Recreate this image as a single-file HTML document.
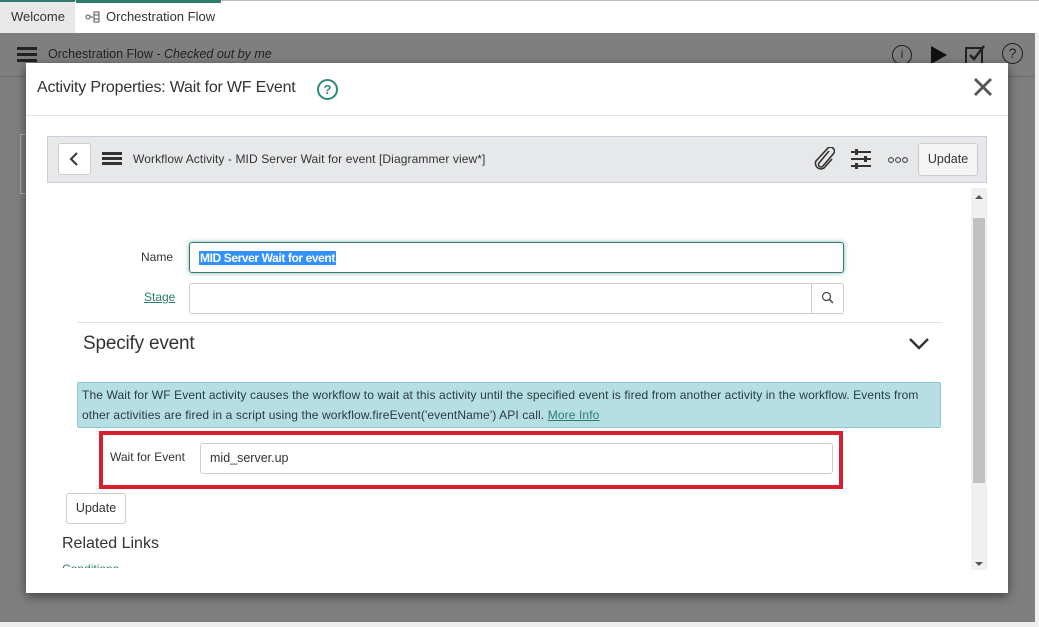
<!DOCTYPE html>
<html><head><meta charset="utf-8"><style>
*{box-sizing:border-box;margin:0;padding:0}
body{width:1039px;height:627px;overflow:hidden;position:relative;font-family:"Liberation Sans",sans-serif;color:#333;background:#fff}
.abs{position:absolute}
.nw{white-space:nowrap}
</style></head><body>
<!-- tab bar -->
<div class="abs" style="left:0;top:0;width:1039px;height:33px;background:#fff;border-top:1px solid #bbb"></div>
<div class="abs" style="left:0;top:0;width:75px;height:33px;background:#e8e8e8;border-top:2px solid #2e7d6f"></div>
<div class="abs nw" style="left:11px;top:9px;font-size:13px;color:#333">Welcome</div>
<div class="abs" style="left:76px;top:0;width:145px;height:3px;background:#2e7d6f"></div>
<svg class="abs" style="left:85px;top:11px" width="16" height="12" viewBox="0 0 16 12"><circle cx="3" cy="6" r="2" fill="none" stroke="#555"/><path d="M5 6h3M9 1h5v10H9zM9 4h5M9 8h5" fill="none" stroke="#555"/></svg>
<div class="abs nw" style="left:106px;top:9px;font-size:13px;color:#333">Orchestration Flow</div>
<!-- gray overlay -->
<div class="abs" style="left:0;top:33px;width:1035px;height:589px;background:#7f7f7f"></div>
<div class="abs" style="left:1035px;top:33px;width:4px;height:594px;background:#f0f0f0"></div>
<div class="abs" style="left:0;top:622px;width:1035px;height:5px;background:#eee"></div>
<div class="abs" style="left:0;top:76px;width:1035px;height:1px;background:#6a6a6a"></div>
<div class="abs" style="left:17px;top:47px;width:20px;height:3px;background:#222;box-shadow:0 6px 0 #222,0 12px 0 #222"></div>
<div class="abs nw" style="left:48px;top:47px;font-size:12.5px;color:#222">Orchestration Flow <i>- Checked out by me</i></div>
<div class="abs" style="left:892px;top:45px;width:20px;height:20px;border:1.5px solid #222;border-radius:50%;font-size:12px;text-align:center;line-height:17px;color:#222">i</div>
<svg class="abs" style="left:929px;top:45px" width="20" height="20"><path d="M2 1L18 10L2 19Z" fill="#111"/></svg>
<svg class="abs" style="left:964px;top:44px" width="24" height="22"><rect x="2" y="4" width="16" height="16" fill="none" stroke="#222" stroke-width="2"/><path d="M6 11l4 4 10-13" fill="none" stroke="#222" stroke-width="2.5"/></svg>
<div class="abs" style="left:1002px;top:43px;width:21px;height:21px;border:1.5px solid #222;border-radius:50%;font-size:14px;text-align:center;line-height:18px;color:#222">?</div>
<div class="abs" style="left:20px;top:134px;width:6px;height:60px;border:1px solid #aaa;border-right:none"></div>
<!-- modal -->
<div class="abs" style="left:26px;top:63px;width:982px;height:530px;background:#fff;box-shadow:0 3px 10px rgba(0,0,0,.5)"></div>
<div class="abs nw" style="left:37px;top:79px;font-size:16px;color:#333;letter-spacing:-.2px">Activity Properties: Wait for WF Event</div>
<div class="abs" style="left:317px;top:79px;width:21px;height:21px;border:2px solid #2e8b7a;border-radius:50%;color:#2e8b7a;font-weight:bold;font-size:13px;text-align:center;line-height:17px">?</div>
<svg class="abs" style="left:973px;top:77px" width="20" height="20"><path d="M2 2L18 18M18 2L2 18" stroke="#555" stroke-width="2.8"/></svg>
<div class="abs" style="left:26px;top:115px;width:982px;height:1px;background:#e3e3e3"></div>
<!-- toolbar -->
<div class="abs" style="left:47px;top:136px;width:940px;height:47px;background:#e6e8ea;border:1px solid #ccd"></div>
<div class="abs" style="left:58px;top:143px;width:33px;height:32px;background:#fff;border:1px solid #ccc;border-radius:3px"></div>
<svg class="abs" style="left:68px;top:151px" width="12" height="16"><path d="M9 2L3 8L9 14" fill="none" stroke="#333" stroke-width="2"/></svg>
<div class="abs" style="left:102px;top:152px;width:20px;height:3px;background:#333;box-shadow:0 5px 0 #333,0 10px 0 #333"></div>
<div class="abs nw" style="left:133px;top:152px;font-size:12px;color:#333;letter-spacing:.1px">Workflow Activity - MID Server Wait for event <span>[Diagrammer view*]</span></div>
<svg class="abs" style="left:813px;top:147px" width="22" height="24"><path d="M16 4l-10 12a2.5 2.5 0 0 0 4 3l11-13a4 4 0 0 0-6-5L3 14a5.5 5.5 0 0 0 8 7l8-9" fill="none" stroke="#333" stroke-width="1.6"/></svg>
<svg class="abs" style="left:850px;top:149px" width="22" height="20"><path d="M1 3h20M1 10h20M1 17h20" stroke="#333" stroke-width="2"/><rect x="5" y="0" width="3" height="6" fill="#333"/><rect x="14" y="7" width="3" height="6" fill="#333"/><rect x="5" y="14" width="3" height="6" fill="#333"/></svg>
<svg class="abs" style="left:887px;top:156px" width="22" height="8"><circle cx="4" cy="4" r="2.4" fill="none" stroke="#333"/><circle cx="11" cy="4" r="2.4" fill="none" stroke="#333"/><circle cx="18" cy="4" r="2.4" fill="none" stroke="#333"/></svg>
<div class="abs" style="left:918px;top:143px;width:60px;height:33px;background:#f5f5f5;border:1px solid #ccc;border-radius:3px;font-size:12.5px;text-align:center;line-height:31px;color:#333">Update</div>
<!-- scrollbar -->
<div class="abs" style="left:971px;top:188px;width:16px;height:382px;background:#f0f0f0"></div>
<div class="abs" style="left:973px;top:218px;width:12px;height:265px;background:#c1c1c1"></div>
<svg class="abs" style="left:975px;top:194px" width="8" height="6"><path d="M0 5L4 1L8 5Z" fill="#555"/></svg>
<svg class="abs" style="left:975px;top:561px" width="8" height="6"><path d="M0 1L4 5L8 1Z" fill="#555"/></svg>
<!-- form -->
<div class="abs nw" style="left:141px;top:250px;font-size:12px;color:#333">Name</div>
<div class="abs" style="left:189px;top:242px;width:655px;height:31px;border:1px solid #2e7d6f;border-radius:3px;box-shadow:0 0 5px rgba(46,125,111,.6)"></div>
<div class="abs nw" style="left:199px;top:251px;font-size:12px;font-weight:bold;color:#fff;background:#3390ff;letter-spacing:-.4px;padding:0 1px">MID Server Wait for event</div>
<div class="abs nw" style="left:144px;top:290px;font-size:12px;color:#2e7d6f;text-decoration:underline">Stage</div>
<div class="abs" style="left:189px;top:283px;width:655px;height:31px;border:1px solid #ccc;border-radius:3px"></div>
<div class="abs" style="left:811px;top:283px;width:1px;height:31px;background:#ccc"></div>
<svg class="abs" style="left:821px;top:291px" width="14" height="14"><circle cx="5.5" cy="5.5" r="4" fill="none" stroke="#444" stroke-width="1.2"/><path d="M8.5 8.5L12 12" stroke="#444" stroke-width="1.4"/></svg>
<div class="abs" style="left:77px;top:322px;width:865px;height:1px;background:#e3e3e3"></div>
<div class="abs nw" style="left:83px;top:333px;font-size:19px;color:#333;letter-spacing:-.2px">Specify event</div>
<svg class="abs" style="left:908px;top:337px" width="22" height="14"><path d="M2 2L11 11L20 2" fill="none" stroke="#333" stroke-width="2.4"/></svg>
<div class="abs" style="left:77px;top:382px;width:864px;height:46px;background:#b5dfe5;border:1px solid #8ec6cf;border-radius:2px"></div>
<div class="abs nw" style="left:82px;top:385px;font-size:12px;line-height:20px;color:#2b3a3f;letter-spacing:.12px">The Wait for WF Event activity causes the workflow to wait at this activity until the specified event is fired from another activity in the workflow. Events from<br>other activities are fired in a script using the workflow.fireEvent('eventName') API call. <span style="color:#2e7d6f;text-decoration:underline">More Info</span></div>
<div class="abs" style="left:99px;top:431px;width:744px;height:58px;border:4px solid #d6202b"></div>
<div class="abs nw" style="left:110px;top:450px;font-size:12px;color:#333">Wait for Event</div>
<div class="abs" style="left:200px;top:443px;width:633px;height:31px;border:1px solid #ccc;border-radius:3px"></div>
<div class="abs nw" style="left:210px;top:451px;font-size:12.5px;color:#333">mid_server.up</div>
<div class="abs" style="left:66px;top:493px;width:60px;height:31px;border:1px solid #ccc;border-radius:3px;font-size:12.5px;text-align:center;line-height:29px;color:#333">Update</div>
<div class="abs nw" style="left:62px;top:535px;font-size:16px;color:#333">Related Links</div>
<div class="abs" style="left:62px;top:562px;width:80px;height:6px;overflow:hidden"><div style="font-size:12px;color:#2e7d6f;line-height:14px">Conditions</div></div>
</body></html>
